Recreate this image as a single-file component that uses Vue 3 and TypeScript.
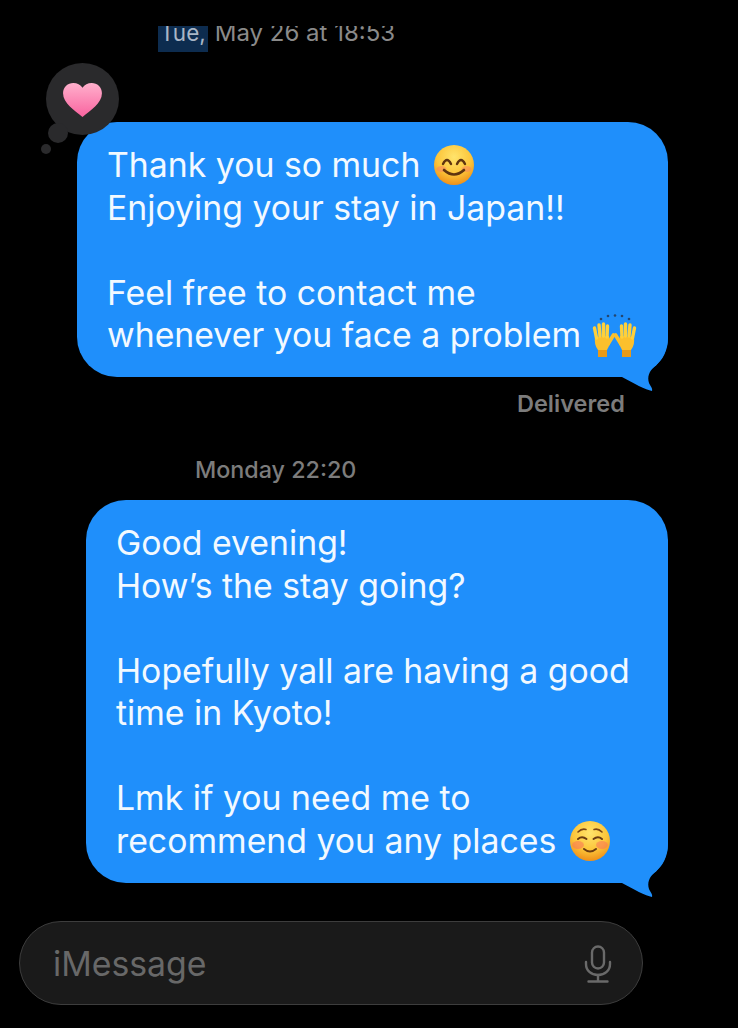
<script setup lang="ts">
// tail shape shared by both outgoing bubbles
const tailPath =
	'M60 0 L60 8 C60 20 55 30 47 36 C41 41 39 47 41 53 C42 56 45 58 44 61 C38 60 25 53 14 47 L0 47 L0 0 Z';
</script>

<template>
	<div class="page">
		<div class="topStamp"><span class="selected">Tue,</span> May 26 at 18:53</div>

		<div class="bubble first">
			<svg class="tail" viewBox="0 0 60 62"><path :d="tailPath" /></svg>
			<span class="text">
				Thank you so much
				<svg class="emoji smile" viewBox="0 0 40 40">
					<defs>
						<radialGradient id="faceA" cx="50%" cy="30%" r="72%">
							<stop offset="0" stop-color="#ffe46c" />
							<stop offset="0.6" stop-color="#fcc53a" />
							<stop offset="1" stop-color="#ee8c16" />
						</radialGradient>
					</defs>
					<circle cx="20" cy="20" r="20" fill="url(#faceA)" />
					<ellipse cx="7.500" cy="24" rx="5" ry="3" fill="#f9786a" opacity="0.45" />
					<ellipse cx="32.500" cy="24" rx="5" ry="3" fill="#f9786a" opacity="0.45" />
					<path d="M9 19 Q13 11 17 19 M23 19 Q27 11 31 19" fill="none" stroke="#5f3510" stroke-width="2.400" stroke-linecap="round" />
					<path d="M10 25 Q20 34 30 25" fill="none" stroke="#5f3510" stroke-width="2.600" stroke-linecap="round" />
				</svg>
				<br />
				Enjoying your stay in Japan!!<br />
				<br />
				Feel free to contact me<br />
				whenever you face a problem
				<svg class="emoji hands" viewBox="0 0 46 44">
					<g fill="#24466f">
						<circle cx="9" cy="5" r="1.300" />
						<circle cx="16" cy="2" r="1.300" />
						<circle cx="23" cy="1.500" r="1.300" />
						<circle cx="30" cy="2" r="1.300" />
						<circle cx="37" cy="5" r="1.300" />
					</g>
					<g id="oneHand">
						<rect x="6" y="34" width="9" height="9" fill="#e89a18" />
						<path d="M3 23 L17 22 L18 30 L15 36 L6 36 C3 32 2.500 28 3 23 Z" fill="#fbc02d" />
						<g fill="none" stroke="#ffd03a" stroke-width="3.400" stroke-linecap="round">
							<path d="M4.500 24 L2.500 14" />
							<path d="M8 22 L7 11" />
							<path d="M11.500 22 L11.500 10" />
							<path d="M15 23 L15.500 12" />
						</g>
						<path d="M16 30 L21.500 21" fill="none" stroke="#fbc02d" stroke-width="3.800" stroke-linecap="round" />
					</g>
					<use href="#oneHand" transform="translate(45 0) scale(-1 1)" />
				</svg>
			</span>

			<div class="thought">
				<span class="dot large" />
				<span class="dot small" />
				<svg class="heart" viewBox="0 0 40 36">
					<defs>
						<linearGradient id="heartFill" x1="0" y1="0" x2="0" y2="1">
							<stop offset="0" stop-color="#ffb0cc" />
							<stop offset="1" stop-color="#f9639f" />
						</linearGradient>
					</defs>
					<path d="M20 35 C12 28 0 21 0 10.500 C0 4 5 0 10.500 0 C14.500 0 18 2 20 5 C22 2 25.500 0 29.500 0 C35 0 40 4 40 10.500 C40 21 28 28 20 35 Z" fill="url(#heartFill)" />
				</svg>
			</div>
		</div>

		<div class="delivered">Delivered</div>
		<div class="stamp">Monday 22:20</div>

		<div class="bubble second">
			<svg class="tail" viewBox="0 0 60 62"><path :d="tailPath" /></svg>
			<span class="text">
				Good evening!<br />
				How’s the stay going?<br />
				<br />
				Hopefully yall are having a good<br />
				time in Kyoto!<br />
				<br />
				Lmk if you need me to<br />
				recommend you any places
				<svg class="emoji relaxed" viewBox="0 0 40 40">
					<defs>
						<radialGradient id="faceB" cx="50%" cy="30%" r="72%">
							<stop offset="0" stop-color="#ffe46c" />
							<stop offset="0.6" stop-color="#fcc53a" />
							<stop offset="1" stop-color="#ee8c16" />
						</radialGradient>
					</defs>
					<circle cx="20" cy="20" r="20" fill="url(#faceB)" />
					<ellipse cx="8" cy="24" rx="6" ry="4" fill="#f9735a" opacity="0.55" />
					<ellipse cx="32" cy="24" rx="6" ry="4" fill="#f9735a" opacity="0.55" />
					<path d="M8 11 Q12 7 16 8.500 M24 8.500 Q28 7 32 11" fill="none" stroke="#7a4414" stroke-width="1.600" stroke-linecap="round" />
					<path d="M8 18 Q12 14.500 16.500 18 M23.500 18 Q28 14.500 32 18" fill="none" stroke="#6b3c12" stroke-width="2" stroke-linecap="round" />
					<path d="M14 28 Q20 33 26 28" fill="none" stroke="#6b3c12" stroke-width="2" stroke-linecap="round" />
				</svg>
			</span>
		</div>

		<div class="inputBar">
			<span class="placeholder">iMessage</span>
			<svg class="mic" viewBox="0 0 28 38" fill="none" stroke="#6a6a6a" stroke-width="2.400" stroke-linecap="round">
				<rect x="8" y="1.500" width="12" height="22" rx="6" />
				<path d="M2 17 V19 C2 25.500 7 30 14 30 C21 30 26 25.500 26 19 V17" />
				<path d="M14 30 V36.500 M4.500 36.500 H23.500" />
			</svg>
		</div>
	</div>
</template>

<style scoped>
.page {
	display: flex;
	flex-direction: column;
	width: 738px;
	height: 1028px;
	overflow: hidden;
	box-sizing: border-box;
	padding-top: 26px;
	background: #000;
	font-family: Inter, 'Liberation Sans', sans-serif;
}
.topStamp {
	height: 26px;
	margin-left: 158px;
	overflow: hidden;
	color: #8a8a8a;
	font-size: 24px;
	line-height: 14px;
	white-space: nowrap;
}
.selected {
	display: inline-block;
	width: 50px;
	height: 26px;
	padding-left: 2px;
	box-sizing: border-box;
	background: #0d2c4f;
	color: #a9b6c6;
	font-size: 22.500px;
}
.bubble {
	position: relative;
	box-sizing: border-box;
	padding: 22px 0 21px 30px;
	border-radius: 40px;
	background: #1f8ffb;
	color: #f2f9ff;
	font-size: 33.800px;
	line-height: 42.500px;
	white-space: nowrap;
}
.text {
	position: relative;
}
.first {
	width: 591px;
	height: 255px;
	margin: 70px 0 0 77px;
}
.second {
	width: 582px;
	height: 383px;
	margin: 16px 0 0 86px;
}
.tail {
	position: absolute;
	right: 0;
	bottom: -15px;
	width: 60px;
	height: 62px;
	fill: #1f8ffb;
}
.emoji {
	display: inline-block;
}
.smile {
	width: 40px;
	height: 40px;
	margin-left: 4px;
	vertical-align: -8px;
}
.hands {
	width: 46px;
	height: 44px;
	margin-left: 1px;
	vertical-align: -11px;
}
.relaxed {
	width: 40px;
	height: 40px;
	margin-left: 4px;
	vertical-align: -8px;
}
.thought {
	position: absolute;
	top: -59px;
	left: -31px;
	width: 73px;
	height: 72px;
	border-radius: 50%;
	background: #2a2a2c;
}
.dot {
	position: absolute;
	border-radius: 50%;
	background: #2a2a2c;
}
.dot.large {
	top: 60px;
	left: 2px;
	width: 20px;
	height: 20px;
}
.dot.small {
	top: 81px;
	left: -5px;
	width: 10px;
	height: 10px;
}
.heart {
	position: absolute;
	top: 20px;
	left: 17px;
	width: 39px;
	height: 35px;
}
.delivered {
	margin: 13px 0 0 517px;
	color: #7c7c7c;
	font-size: 23.500px;
	font-weight: 600;
	line-height: 28px;
}
.stamp {
	margin: 38px 0 0 195px;
	color: #7c7c7c;
	font-size: 23.300px;
	font-weight: 500;
	line-height: 28px;
}
.inputBar {
	display: flex;
	align-items: center;
	justify-content: space-between;
	box-sizing: border-box;
	width: 624px;
	height: 84px;
	margin: 38px 0 0 19px;
	padding: 2px 30px 0 33px;
	border: 1.500px solid #3d3d3d;
	border-radius: 42px;
	background: #1a1a1a;
}
.placeholder {
	color: #686868;
	font-size: 33.800px;
	line-height: 42px;
}
.mic {
	width: 28px;
	height: 38px;
}
</style>
